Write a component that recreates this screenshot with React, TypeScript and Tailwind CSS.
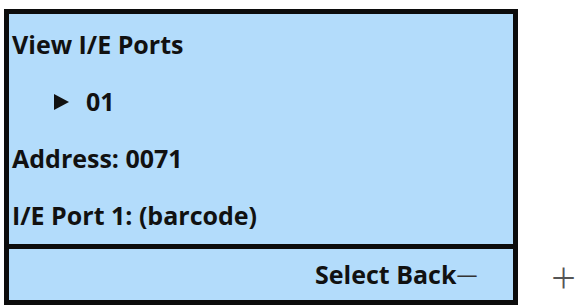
import React from 'react';

const rows = ['View I/E Ports', '01', 'Address: 0071', 'I/E Port 1: (barcode)'];

export default function App() {
  return (
    <div className="w-[576px] h-[307px] bg-white pl-[4px] pt-[9px] flex items-start font-['Open_Sans',sans-serif] text-[#111]">
      <div className="w-[515px] border-[5px] border-[#0c0c0c] bg-[#b3dcfb]">
        {/* screen body */}
        <div className="h-[230px] pt-[2px] px-[3px]">
          {rows.map((row, i) => (
            <div key={i} className="h-[57px] flex items-center text-[25px] font-bold whitespace-nowrap">
              {i === 1 ? (
                <>
                  <span className="ml-[42px] mr-[17px] w-0 h-0 border-y-[8px] border-y-transparent border-l-[15px] border-l-[#111]" />
                  {row}
                </>
              ) : (
                row
              )}
            </div>
          ))}
        </div>
        <div className="h-[5px] bg-[#0c0c0c]" />
        {/* soft keys */}
        <div className="h-[51px] flex items-center pl-[306px] text-[25px] font-bold whitespace-nowrap">
          Select Back
          <span className="text-[21px] font-normal text-[#333]">—</span>
        </div>
      </div>
      <div className="self-end mb-[8px] ml-[33px] text-[44px] font-light text-[#555] leading-none">+</div>
    </div>
  );
}
